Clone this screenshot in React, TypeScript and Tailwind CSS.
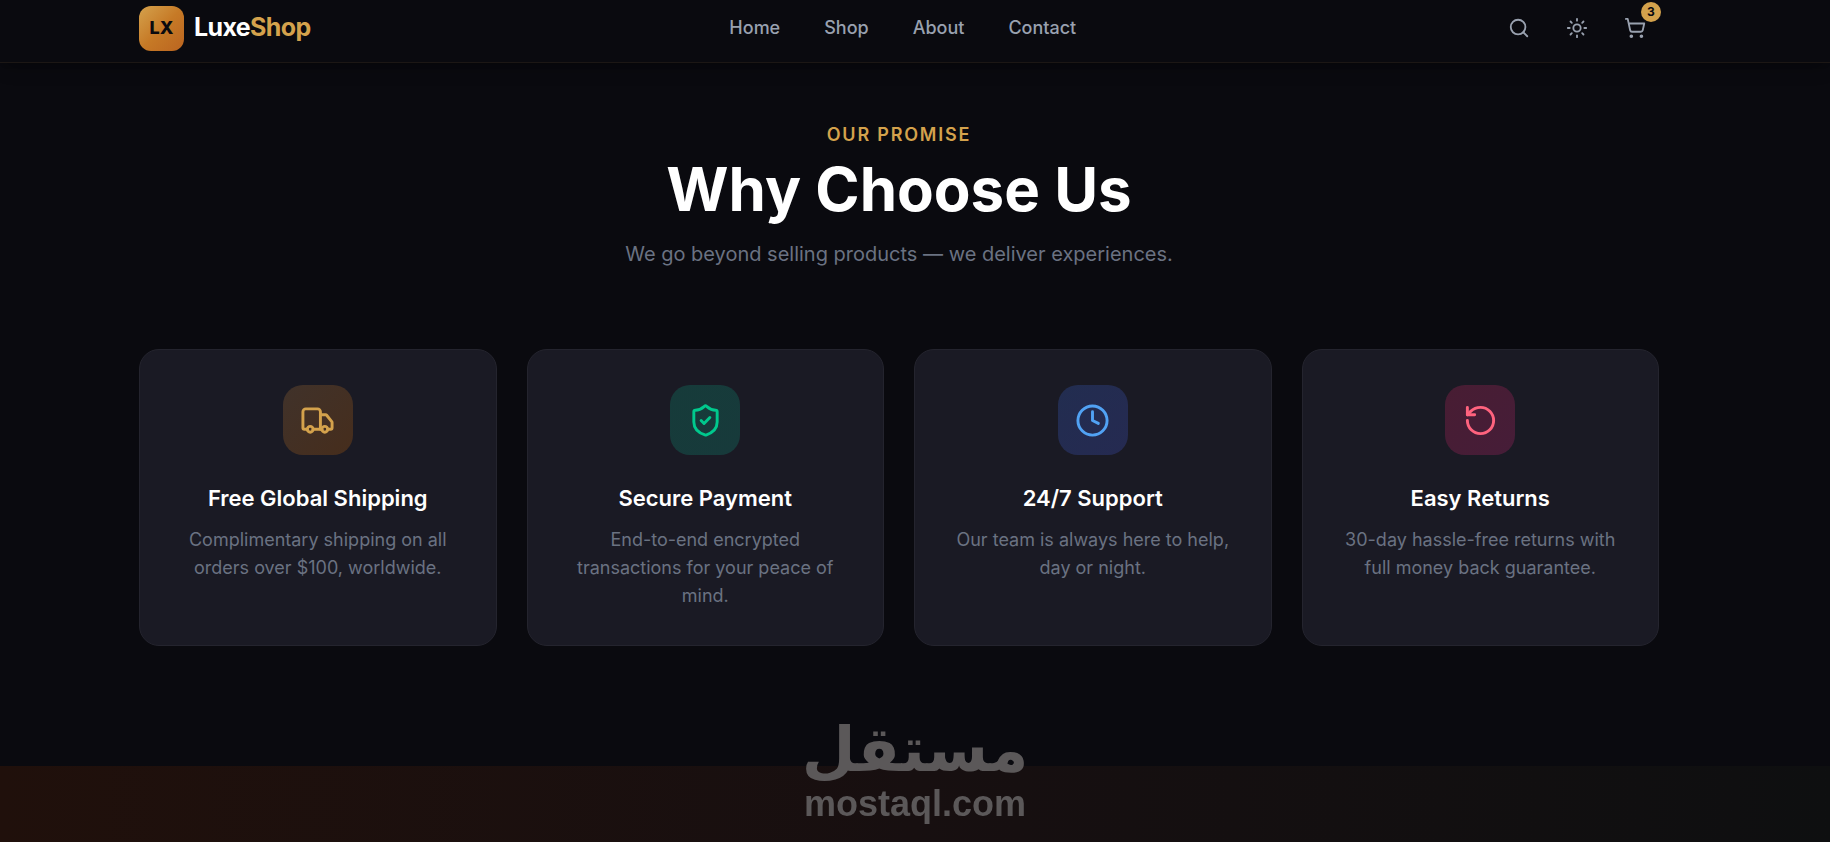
import React from "react";
import {
  Clock,
  RotateCcw,
  Search,
  ShieldCheck,
  ShoppingCart,
  Sun,
  Truck,
  type LucideIcon,
} from "lucide-react";

interface Feature {
  title: string;
  description: string;
  icon: LucideIcon;
  tone: string;
}

const navLinks = ["Home", "Shop", "About", "Contact"];

const features: Feature[] = [
  {
    title: "Free Global Shipping",
    description: "Complimentary shipping on all orders over $100, worldwide.",
    icon: Truck,
    tone: "from-[#40322a] to-[#462d1c] text-[#d4a24c]",
  },
  {
    title: "Secure Payment",
    description: "End-to-end encrypted transactions for your peace of mind.",
    icon: ShieldCheck,
    tone: "from-[#163b3a] to-[#173a3b] text-[#00c98d]",
  },
  {
    title: "24/7 Support",
    description: "Our team is always here to help, day or night.",
    icon: Clock,
    tone: "from-[#222d50] to-[#252a51] text-[#51a2f4]",
  },
  {
    title: "Easy Returns",
    description: "30-day hassle-free returns with full money back guarantee.",
    icon: RotateCcw,
    tone: "from-[#481d33] to-[#461d38] text-[#ff637e]",
  },
];

const iconButton =
  "relative flex size-12 items-center justify-center rounded-xl text-[#99a1af] hover:text-white transition-colors";

const Navbar: React.FC = () => (
  <header className="sticky top-0 z-10 border-b border-[#1c1715] bg-[#0a0a0f] pl-4 pr-12 shadow-lg shadow-black/20">
    <div className="mx-auto flex h-[62px] max-w-[1520px] items-center justify-between pb-1.5">
      <a href="#" className="flex items-center gap-2.5">
        <span className="flex size-[45px] items-center justify-center rounded-xl bg-linear-to-br from-[#d4a24c] via-[#c67a26] to-[#bb6420] text-lg font-extrabold text-[#0a0a0f]">
          LX
        </span>
        <span className="text-[25px] font-bold tracking-tight text-white">
          Luxe<span className="text-[#d4a24c]">Shop</span>
        </span>
      </a>

      <nav className="hidden items-center gap-11 md:flex">
        {navLinks.map((link) => (
          <a
            key={link}
            href="#"
            className="text-lg font-medium text-[#99a1af] hover:text-white transition-colors"
          >
            {link}
          </a>
        ))}
      </nav>

      <div className="flex items-center gap-2.5">
        <button type="button" aria-label="Search" className={iconButton}>
          <Search size={22} />
        </button>
        <button type="button" aria-label="Toggle theme" className={iconButton}>
          <Sun size={22} />
        </button>
        <button type="button" aria-label="Cart" className={iconButton}>
          <ShoppingCart size={22} />
          <span className="absolute -right-0.5 -top-0.5 flex size-5 items-center justify-center rounded-full bg-[#d4a24c] text-xs font-bold text-[#0a0a0f]">
            3
          </span>
        </button>
      </div>
    </div>
  </header>
);

const FeatureCard: React.FC<{ feature: Feature }> = ({ feature }) => {
  const Icon = feature.icon;
  return (
    <article className="rounded-[20px] border border-[#24242e] bg-[#1a1a24] p-[35px] text-center">
      <div
        className={`mx-auto mb-[25px] flex size-[70px] items-center justify-center rounded-[20px] bg-linear-to-br ${feature.tone}`}
      >
        <Icon size={35} />
      </div>
      <h3 className="mb-2.5 text-[22px] leading-9 font-semibold text-white">
        {feature.title}
      </h3>
      <p className="text-lg leading-7 text-[#6a7282]">
        {feature.description}
      </p>
    </article>
  );
};

const Watermark: React.FC = () => (
  <div className="pointer-events-none fixed inset-x-0 bottom-5 z-20 flex flex-col items-center text-[#5b5859]">
    <span
      lang="ar"
      dir="rtl"
      className="font-['DejaVu_Sans',sans-serif] text-[62px] leading-[72px] font-bold"
    >
      مستقل
    </span>
    <span className="font-['Liberation_Sans',sans-serif] text-4xl leading-9 font-bold">
      mostaql.com
    </span>
  </div>
);

export default function App() {
  return (
    <div className="flex min-h-screen flex-col bg-[#0a0a0f] font-['Inter',sans-serif]">
      <Navbar />

      <main className="flex grow flex-col">
        <section className="pt-[59px] pb-[120px] pl-4 pr-12">
          <div className="mb-20 text-center">
            <p className="mb-3 text-lg leading-[25px] font-semibold tracking-widest text-[#d4a24c] uppercase">
              Our Promise
            </p>
            <h2 className="mb-5 text-6xl leading-[60px] font-bold text-white">
              Why Choose Us
            </h2>
            <p className="text-xl leading-[30px] text-[#6a7282]">
              We go beyond selling products — we deliver experiences.
            </p>
          </div>

          <div className="mx-auto grid max-w-[1520px] gap-[30px] sm:grid-cols-2 lg:grid-cols-4">
            {features.map((feature) => (
              <FeatureCard key={feature.title} feature={feature} />
            ))}
          </div>
        </section>

        {/* Top of the promo banner */}
        <section className="grow bg-linear-to-r from-[#20100b] via-[#170f10] to-[#0e0f10]" />
      </main>

      <Watermark />
    </div>
  );
}
